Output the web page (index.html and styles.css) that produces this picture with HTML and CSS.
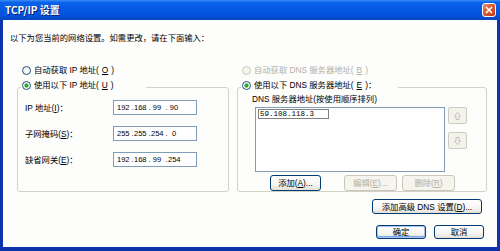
FILE: index.html
```html
<!DOCTYPE html>
<html lang="zh-CN">
<head>
    <meta charset="UTF-8">
    <title>TCP/IP 设置</title>
    <link rel="stylesheet" href="styles.css">
</head>
<body>

    <div class="window">
        <div class="titlebar">
            <span class="title">TCP/IP 设置</span>
            <span class="close-btn">
                <svg width="8" height="8" viewBox="0 0 8 8"><path d="M1 1 L7 7 M7 1 L1 7" stroke="#fff" stroke-width="1.6" fill="none"/></svg>
            </span>
        </div>

        <div class="dialog-body">
            <p class="intro">以下为您当前的网络设置。如需更改，请在下面输入：</p>

            <div class="columns">
                <!-- IP address side -->
                <div class="col col-ip">
                    <div class="radio-row"><span class="radio"></span>自动获取 IP 地址(<u>O</u>)</div>
                    <div class="group">
                        <div class="legend legend-ip"><span class="radio checked"></span>使用以下 IP 地址(<u>U</u>)</div>
                        <div class="ip-fields">
                            <div class="field-row">
                                <span class="field-label">IP 地址(<u>I</u>)：</span>
                                <div class="ipbox"><span class="seg">192</span><span class="dot">.</span><span class="seg">168</span><span class="dot">.</span><span class="seg">99</span><span class="dot">.</span><span class="seg">90</span></div>
                            </div>
                            <div class="field-row">
                                <span class="field-label">子网掩码(<u>S</u>)：</span>
                                <div class="ipbox"><span class="seg">255</span><span class="dot">.</span><span class="seg">255</span><span class="dot">.</span><span class="seg">254</span><span class="dot">.</span><span class="seg">0</span></div>
                            </div>
                            <div class="field-row">
                                <span class="field-label">缺省网关(<u>E</u>)：</span>
                                <div class="ipbox"><span class="seg">192</span><span class="dot">.</span><span class="seg">168</span><span class="dot">.</span><span class="seg">99</span><span class="dot">.</span><span class="seg">254</span></div>
                            </div>
                        </div>
                    </div>
                </div>

                <!-- DNS side -->
                <div class="col col-dns">
                    <div class="radio-row disabled"><span class="radio"></span>自动获取 DNS 服务器地址(<u>B</u>)</div>
                    <div class="group">
                        <div class="legend legend-dns"><span class="radio checked"></span>使用以下 DNS 服务器地址(<u>E</u>)：</div>
                        <div class="dns-body">
                            <div class="dns-caption">DNS 服务器地址(按使用顺序排列)</div>
                            <div class="list-row">
                                <div class="listbox">
                                    <div class="entry">59.108.118.3</div>
                                </div>
                                <div class="move-btns">
                                    <span class="move-btn">
                                        <svg width="7" height="8" viewBox="0 0 7 8"><path d="M3.5 0.5 L6.5 4 H5 V7.5 H2 V4 H0.5 Z" stroke="#b9b6a8" fill="none" stroke-width="0.8"/></svg>
                                    </span>
                                    <span class="move-btn">
                                        <svg width="7" height="8" viewBox="0 0 7 8"><path d="M3.5 7.5 L6.5 4 H5 V0.5 H2 V4 H0.5 Z" stroke="#b9b6a8" fill="none" stroke-width="0.8"/></svg>
                                    </span>
                                </div>
                            </div>
                            <div class="dns-buttons">
                                <button class="btn btn-add">添加(<u>A</u>)...</button>
                                <button class="btn btn-edit" disabled>编辑(<u>E</u>)...</button>
                                <button class="btn btn-del" disabled>删除(<u>R</u>)</button>
                            </div>
                        </div>
                    </div>
                </div>
            </div>

            <div class="adv-row">
                <button class="btn btn-adv">添加高级 DNS 设置(<u>D</u>)...</button>
            </div>

            <div class="actions">
                <button class="btn btn-ok default">确定</button>
                <button class="btn btn-cancel">取消</button>
            </div>
        </div>
    </div>

</body>
</html>
```

FILE: styles.css
```css
/* Reset */
*, *::before, *::after {
    box-sizing: border-box;
    margin: 0;
    padding: 0;
}

body {
    font-family: "Liberation Sans", "Noto Sans CJK SC", sans-serif;
    font-size: 8.3px;
    line-height: 12px;
    color: #000;
    background: #fff;
}

u {
    text-underline-offset: 1px;
}

/* Window frame */
.window {
    width: 500px;
    height: 251px;
    display: flex;
    flex-direction: column;
    background: #0d34aa; /* side + bottom frame */
}

.titlebar {
    height: 20px;
    flex: none;
    display: flex;
    align-items: center;
    justify-content: space-between;
    padding: 0 4px 0 5px;
    background: linear-gradient(to bottom, #3d8ef7 0%, #0a62ea 12%, #0558e3 50%, #0451d9 80%, #0745bb 100%);
}

.title {
    color: #fff;
    font-family: "Noto Sans CJK SC", sans-serif;
    font-weight: bold;
    font-size: 10px;
    text-shadow: 1px 1px 0 #0b2170;
}

.close-btn {
    width: 14px;
    height: 14px;
    border: 1px solid #fff;
    border-radius: 3px;
    background: linear-gradient(135deg, #e98a68 0%, #d9572f 50%, #c23c17 100%);
    display: flex;
    align-items: center;
    justify-content: center;
}

.dialog-body {
    flex: 1;
    margin: 0 3px 4px;
    background: #fdfdfc;
    display: flex;
    flex-direction: column;
}

.intro {
    margin: 12px 0 0 7px;
}

/* Two group columns */
.columns {
    display: flex;
    gap: 8px;
    margin: 20px 0 0 14px;
}

.col {
    display: flex;
    flex-direction: column;
}

.col-ip { width: 212px; }
.col-dns { width: 250px; }

.radio-row {
    display: flex;
    align-items: center;
    gap: 3px;
    height: 12px;
    padding-left: 5px;
}

.radio-row.disabled {
    color: #b3b0a2;
}

.radio {
    width: 9px;
    height: 9px;
    flex: none;
    border: 1px solid #1c5180;
    border-radius: 50%;
    background: radial-gradient(circle at 60% 60%, #fff 0%, #e6e5df 100%);
}

.radio.checked {
    background: radial-gradient(circle, #2fb52f 0, #21a121 1.8px, #fff 2.4px);
}

.disabled .radio {
    border-color: #c9c7ba;
    background: #f6f5ef;
}

.group {
    flex: 1;
    margin-top: 11px;
    border: 1px solid #d3d2c6;
    border-radius: 3px;
}

.legend {
    display: flex;
    align-items: center;
    gap: 3px;
    width: fit-content;
    height: 12px;
    margin: -9px 0 0 3px;
    padding: 0 0 0 1px;
    background: #fdfdfc;
}

.legend-ip { padding-right: 32px; }
.legend-dns { padding-right: 22px; }

/* IP fields */
.ip-fields {
    display: flex;
    flex-direction: column;
    gap: 11px;
    padding: 9px 0 0 7px;
}

.field-row {
    display: flex;
    align-items: center;
    height: 15px;
}

.field-label {
    width: 88px;
}

.ipbox {
    width: 84px;
    height: 15px;
    border: 1px solid #7f9db9;
    background: #fff;
    display: flex;
    align-items: center;
    padding-left: 3px;
    font-family: "Liberation Sans", sans-serif;
    font-size: 7.5px;
}

.seg {
    width: 12px;
    text-align: center;
}

.dot {
    width: 5px;
    text-align: right;
    padding-right: 0.5px;
}

/* DNS list */
.dns-body {
    padding: 2px 0 0 14px;
}

.dns-caption {
    height: 12px;
}

.list-row {
    display: flex;
    gap: 3px;
    margin: 2px 0 0 3px;
}

.listbox {
    width: 190px;
    height: 65px;
    border: 1px solid #7f9db9;
    background: #fff;
    padding: 1px 2px;
}

.entry {
    width: 71px;
    height: 10px;
    border: 1px solid #808080;
    padding-left: 1px;
    font-family: "Liberation Mono", monospace;
    font-size: 7.5px;
    line-height: 8px;
}

.move-btns {
    display: flex;
    flex-direction: column;
    gap: 8px;
}

.move-btn {
    width: 19px;
    height: 17px;
    border: 1px solid #cfcdc2;
    border-radius: 2px;
    background: #f3f2ec;
    display: flex;
    align-items: center;
    justify-content: center;
}

.dns-buttons {
    display: flex;
    margin: 3px 0 0 18px;
}

/* XP style buttons */
.btn {
    font: inherit;
    height: 16px;
    border: 1px solid #003c74;
    border-radius: 3px;
    background: linear-gradient(to bottom, #fff 0%, #f6f5f1 60%, #e3e0d6 100%);
    color: #000;
    display: flex;
    align-items: center;
    justify-content: center;
}

.btn:disabled {
    border-color: #c9c7ba;
    color: #b3b0a2;
    background: #f5f4ee;
}

.btn-add { width: 51px; }
.btn-edit { width: 53px; margin-left: 23px; }
.btn-del { width: 53px; margin-left: 5px; }

.adv-row {
    display: flex;
    justify-content: flex-end;
    margin-top: 7px;
    padding-right: 15px;
}

.btn-adv {
    width: 110px;
    height: 15px;
}

.actions {
    display: flex;
    justify-content: flex-end;
    gap: 8px;
    margin-top: 11px;
    padding-right: 13px;
}

.btn-ok, .btn-cancel {
    width: 50px;
    height: 14px;
}

.btn.default {
    box-shadow: inset 0 0 0 1px #a8c4f0, inset 0 -1px 0 1px #7ea6e6;
}
```
